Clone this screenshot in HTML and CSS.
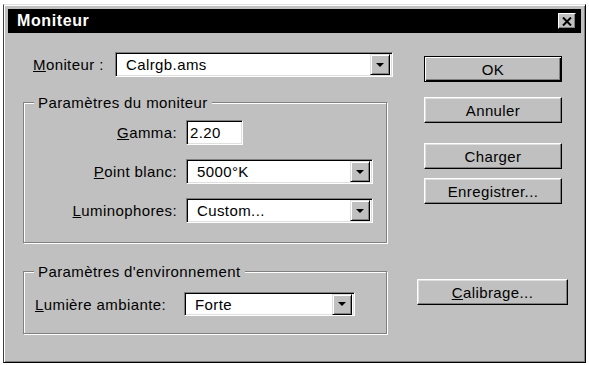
FILE: index.html
```html
<!DOCTYPE html>
<html lang="fr">
<head>
    <meta charset="utf-8">
    <title>Moniteur</title>
    <link rel="stylesheet" href="styles.css">
</head>
<body>
    <div class="window">
        <div class="titlebar">
            <span class="title">Moniteur</span>
            <span class="close">
                <svg width="10" height="9" viewBox="0 0 10 9"><path d="M1 0.5 L9 8.5 M9 0.5 L1 8.5" stroke="#000" stroke-width="2"/></svg>
            </span>
        </div>
        <div class="content">
            <div class="main">
                <div class="top-row">
                    <label class="top-label"><u>M</u>oniteur :</label>
                    <div class="combo top-combo"><span class="value">Calrgb.ams</span><span class="drop"></span></div>
                </div>

                <fieldset class="group monitor">
                    <legend>Paramètres du moniteur</legend>
                    <div class="form-grid">
                        <label><u>G</u>amma:</label>
                        <div class="field gamma">2.20</div>
                        <label><u>P</u>oint blanc:</label>
                        <div class="combo"><span class="value">5000°K</span><span class="drop"></span></div>
                        <label><u>L</u>uminophores:</label>
                        <div class="combo"><span class="value">Custom...</span><span class="drop"></span></div>
                    </div>
                </fieldset>

                <fieldset class="group env">
                    <legend>Paramètres d'environnement</legend>
                    <div class="env-row">
                        <label><u>L</u>umière ambiante:</label>
                        <div class="combo env-combo"><span class="value">Forte</span><span class="drop"></span></div>
                    </div>
                </fieldset>
            </div>

            <div class="side">
                <button class="btn default" id="ok-btn">OK</button>
                <button class="btn" id="cancel-btn">Annuler</button>
                <button class="btn" id="load-btn">Charger</button>
                <button class="btn" id="save-btn">Enregistrer...</button>
                <button class="btn wide" id="calib-btn"><u>C</u>alibrage...</button>
            </div>
        </div>
    </div>
</body>
</html>
```

FILE: styles.css
```css
body {
    margin: 0;
    background: #fff;
    font-family: "Liberation Sans", Arial, sans-serif;
    font-size: 15px;
    letter-spacing: 0.4px;
    color: #000;
}
.window {
    margin: 4px 3px 3px 3px;
    height: 353px;
    background: #c0c0c0;
    border-top: 1px solid #dfdfdf;
    border-left: 1px solid #404040;
    border-right: 1px solid #000;
    border-bottom: 1px solid #000;
    box-shadow: inset 1px 1px 0 #fff, inset -1px -1px 0 #808080;
    padding: 4px 4px 0 4px;
    display: flex;
    flex-direction: column;
}
.titlebar {
    height: 24px;
    background: #000;
    color: #fff;
    display: flex;
    align-items: center;
    justify-content: space-between;
}
.title {
    font-weight: bold;
    font-size: 16px;
    letter-spacing: 0.6px;
    padding-left: 9px;
}
.close {
    width: 16px;
    height: 14px;
    margin-right: 5px;
    background: #c0c0c0;
    border-top: 1px solid #fff;
    border-left: 1px solid #fff;
    border-right: 1px solid #000;
    border-bottom: 1px solid #000;
    box-shadow: inset -1px -1px 0 #808080;
    display: flex;
    align-items: center;
    justify-content: center;
}

/* main area */
.content {
    display: flex;
    padding-left: 15px;
    gap: 24px;
}
.main {
    width: 370px;
}
.top-row {
    display: flex;
    align-items: center;
    margin-top: 19px;
}
.top-label {
    margin-left: 10px;
    width: 82px;
}
.top-combo {
    width: 278px;
}

/* sunken controls */
.combo, .field {
    box-sizing: border-box;
    height: 25px;
    background: #fff;
    border-top: 1px solid #808080;
    border-left: 1px solid #808080;
    border-right: 1px solid #fff;
    border-bottom: 1px solid #fff;
    box-shadow: inset 1px 1px 0 #000, inset -1px -1px 0 #dfdfdf;
}
.combo {
    display: flex;
    align-items: center;
}
.combo .value {
    flex: 1;
    padding-left: 10px;
}
.drop {
    box-sizing: border-box;
    width: 20px;
    height: 21px;
    margin-right: 2px;
    background: #c0c0c0;
    border-top: 1px solid #dfdfdf;
    border-left: 1px solid #dfdfdf;
    border-right: 1px solid #000;
    border-bottom: 1px solid #000;
    box-shadow: inset 1px 1px 0 #fff, inset -1px -1px 0 #808080;
    display: flex;
    align-items: center;
    justify-content: center;
}
.drop::after {
    content: "";
    border-left: 4px solid transparent;
    border-right: 4px solid transparent;
    border-top: 4px solid #000;
}
.field {
    display: flex;
    align-items: center;
    padding-left: 3px;
}

/* group boxes */
.group {
    margin: 0;
    padding: 0;
    border: 1px solid #808080;
    box-shadow: 1px 1px 0 #fff, inset 1px 1px 0 #fff;
    width: 362px;
}
.group legend {
    margin-left: 10px;
    padding: 0 4px;
    line-height: 17px;
    background: #c0c0c0;
}
.monitor {
    margin-top: 17px;
    padding: 9px 0 19px 0;
}
.form-grid {
    display: grid;
    grid-template-columns: 153px 187px;
    column-gap: 9px;
    row-gap: 14px;
    align-items: center;
}
.form-grid label {
    text-align: right;
}
.gamma {
    width: 57px;
}
.env {
    margin-top: 20px;
    padding: 12px 0 17px 0;
}
.env-row {
    display: flex;
    align-items: center;
    padding-left: 11px;
}
.env-row label {
    width: 149px;
}
.env-combo {
    width: 171px;
    height: 24px;
}

/* buttons */
.side {
    width: 151px;
    display: flex;
    flex-direction: column;
    align-items: flex-start;
}
.btn {
    width: 138px;
    height: 26px;
    margin-left: 7px;
    padding: 0;
    font-family: inherit;
    font-size: 15px;
    letter-spacing: 0.4px;
    color: #000;
    background: #c0c0c0;
    border-top: 1px solid #fff;
    border-left: 1px solid #fff;
    border-right: 1px solid #000;
    border-bottom: 1px solid #000;
    box-shadow: inset -1px -1px 0 #808080, inset 1px 1px 0 #dfdfdf;
}
.btn.default {
    border: 1px solid #000;
    box-shadow: inset 1px 1px 0 #fff, inset -1px -1px 0 #000, inset -2px -2px 0 #808080;
    margin-top: 23px;
}
#cancel-btn {
    margin-top: 15px;
}
#load-btn {
    margin-top: 20px;
}
#save-btn {
    margin-top: 9px;
}
.btn.wide {
    width: 151px;
    margin-left: 0;
    margin-top: 75px;
}
```
